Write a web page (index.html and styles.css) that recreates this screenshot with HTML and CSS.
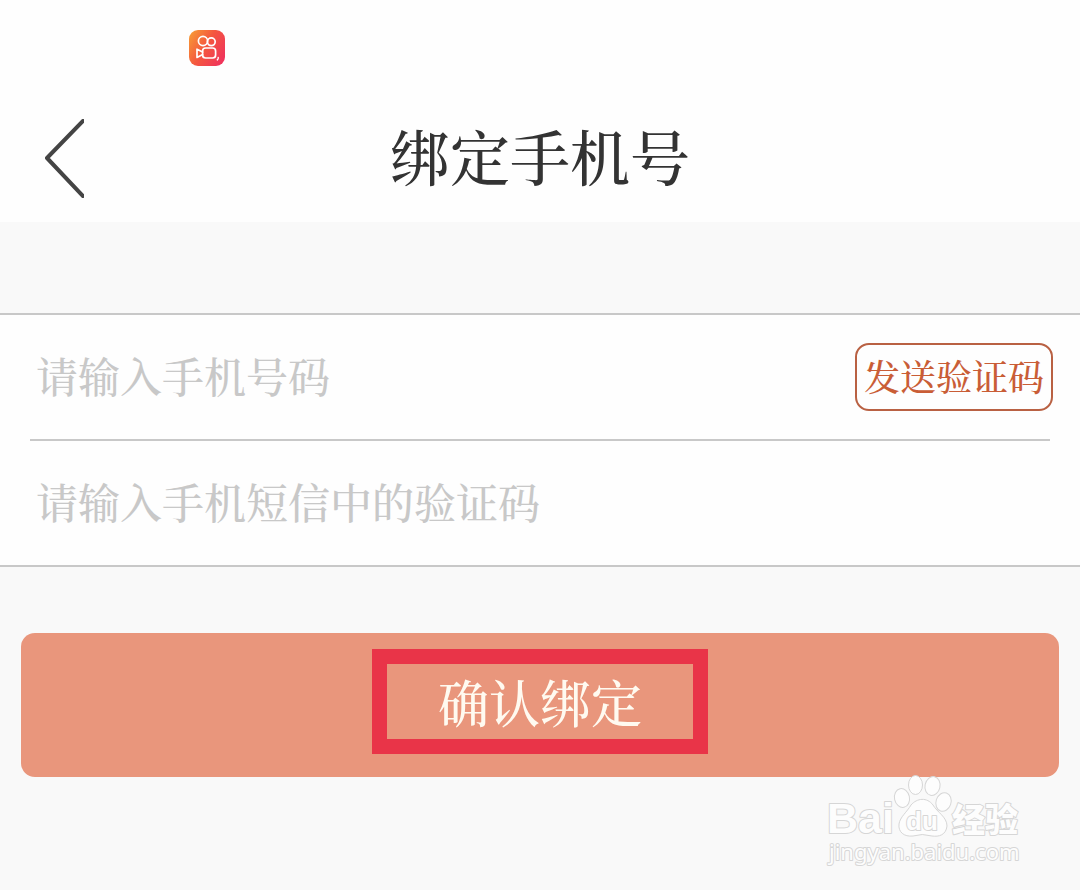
FILE: index.html
```html
<!DOCTYPE html>
<html lang="zh-CN">
<head>
<meta charset="utf-8">
<meta name="viewport" content="width=device-width, initial-scale=1">
<title>绑定手机号</title>
<link rel="stylesheet" href="styles.css">
</head>
<body>
<div class="status-bar">
  <svg class="app-icon" viewBox="0 0 36 36" role="img" aria-label="快手">
    <defs>
      <linearGradient id="app-bg" x1="0" y1="0.1" x2="1" y2="0.7">
        <stop offset="0" stop-color="#f79a35"/>
        <stop offset="0.5" stop-color="#f4573f"/>
        <stop offset="1" stop-color="#f0355a"/>
      </linearGradient>
    </defs>
    <rect width="36" height="36" rx="9" fill="url(#app-bg)"/>
    <g fill="none" stroke="#fff" stroke-width="1.7" stroke-linejoin="round" stroke-linecap="round">
      <circle cx="14" cy="11" r="4.6"/>
      <circle cx="22.3" cy="11.8" r="3.9"/>
      <rect x="13.6" y="18" width="13" height="10" rx="3"/>
      <path d="M13.6 22 8 19.2V27.4L13.6 24.6"/>
      <path d="M29.2 27.5Q29.5 29 28.3 29.9" stroke-width="1.4"/>
    </g>
  </svg>
</div>
<header class="header">
  <button class="back" type="button" aria-label="返回">
    <svg viewBox="0 0 40 80" aria-hidden="true"><path d="M39 2 3 39 39 77" fill="none" stroke="#444" stroke-width="4" stroke-linejoin="round" stroke-linecap="round"/></svg>
  </button>
  <h1 class="title">绑定手机号</h1>
</header>
<main>
  <form class="bind-form">
    <div class="fields">
      <div class="row row-phone">
        <input class="field" type="tel" placeholder="请输入手机号码" aria-label="手机号码">
        <button class="send" type="button">发送验证码</button>
      </div>
      <div class="row">
        <input class="field" type="text" placeholder="请输入手机短信中的验证码" aria-label="验证码">
      </div>
    </div>
    <button class="submit" type="submit"><span class="highlight">确认绑定</span></button>
  </form>
</main>
<svg class="watermark" viewBox="0 0 200 100" role="img" aria-label="Baidu 经验 jingyan.baidu.com">
  <text x="7" y="61" class="wm-latin">Bai</text>
  <text x="132" y="60" class="wm-cn">经验</text>
  <g class="wm-paw">
    <ellipse cx="82" cy="26" rx="7.5" ry="9.5" transform="rotate(-12 82 26)"/>
    <ellipse cx="95.5" cy="13" rx="7" ry="9.5"/>
    <ellipse cx="112.5" cy="14" rx="7.5" ry="9.5" transform="rotate(12 112.5 14)"/>
    <ellipse cx="123.5" cy="30" rx="7.5" ry="9.5" transform="rotate(18 123.5 30)"/>
    <path d="M91 33C97 26 107 25 113 33C117 40 127 45 127 54C126 63 119 65 112 64Q102 61 93 64C84 65 78 60 79 52C80 45 87 40 91 33Z"/>
  </g>
  <text x="86" y="58" class="wm-du">du</text>
  <text x="9" y="88" class="wm-url">jingyan.baidu.com</text>
</svg>
</body>
</html>
```

FILE: styles.css
```css
* {
  box-sizing: border-box;
}

body {
  margin: 0;
  min-height: 100vh;
  background: #f9f9f9;
  color: #333;
  font-family: "Noto Serif CJK SC", "Noto Sans CJK SC", serif;
  font-weight: 500;
}

button,
input {
  margin: 0;
  font-family: inherit;
  font-weight: inherit;
}

.status-bar {
  padding: 30px 189px 0;
  height: 96px;
  background: #fefefe;
}

.app-icon {
  display: block;
  width: 36px;
  height: 36px;
}

.header {
  display: grid;
  grid-template-columns: 84px 1fr 84px;
  align-items: center;
  height: 126px;
  background: #fefefe;
}

.back {
  justify-self: end;
  padding: 0;
  border: 0;
  background: none;
}

.back svg {
  display: block;
  width: 40px;
  height: 80px;
}

.title {
  margin: 0;
  padding-bottom: 8px;
  font-size: 60px;
  font-weight: inherit;
  line-height: 80px;
  text-align: center;
}

.bind-form {
  padding-top: 91px;
}

.fields {
  padding: 0 30px;
  border: solid #c8c8c8;
  border-width: 2px 0;
  background: #fefefe;
}

.row {
  display: flex;
  align-items: center;
  height: 124px;
}

.row-phone {
  height: 126px;
  border-bottom: 2px solid #c8c8c8;
}

.field {
  flex: 1;
  min-width: 0;
  height: 68px;
  padding: 0 6px 5px;
  border: 0;
  outline: 0;
  background: none;
  color: #333;
  font-size: 42px;
}

.field::placeholder {
  color: #c8c8c8;
  opacity: 1;
}

.send {
  height: 68px;
  margin-right: -3px;
  padding: 0 7px 3px;
  border: 2px solid #b96143;
  border-radius: 14px;
  background: #fefefe;
  color: #c95d36;
  font-size: 36px;
  line-height: 60px;
  white-space: nowrap;
}

.submit {
  display: flex;
  align-items: center;
  justify-content: center;
  width: calc(100% - 42px);
  height: 144px;
  margin: 66px 21px 0;
  padding: 0 0 7px;
  border: 0;
  border-radius: 14px;
  background: #e9967c;
  color: #fffaf0;
}

.highlight {
  padding: 0 51px;
  border: 15px solid #e93448;
  font-size: 51px;
  line-height: 75px;
}

.watermark {
  position: absolute;
  right: 60px;
  top: 772px;
  width: 200px;
  height: 100px;
  overflow: visible;
  fill: #fdfdfd;
  stroke: #d6d6d6;
  stroke-width: 2px;
  stroke-linejoin: round;
  paint-order: stroke;
}

.wm-paw {
  stroke-width: 1px;
  paint-order: normal;
}

.wm-latin {
  font: 700 43px "Liberation Sans", sans-serif;
}

.wm-cn {
  font: 900 33px "Noto Sans CJK SC", sans-serif;
}

.wm-du {
  font: 700 26px "Liberation Sans", sans-serif;
}

.wm-url {
  font: 400 22px "Noto Sans", sans-serif;
}
```
